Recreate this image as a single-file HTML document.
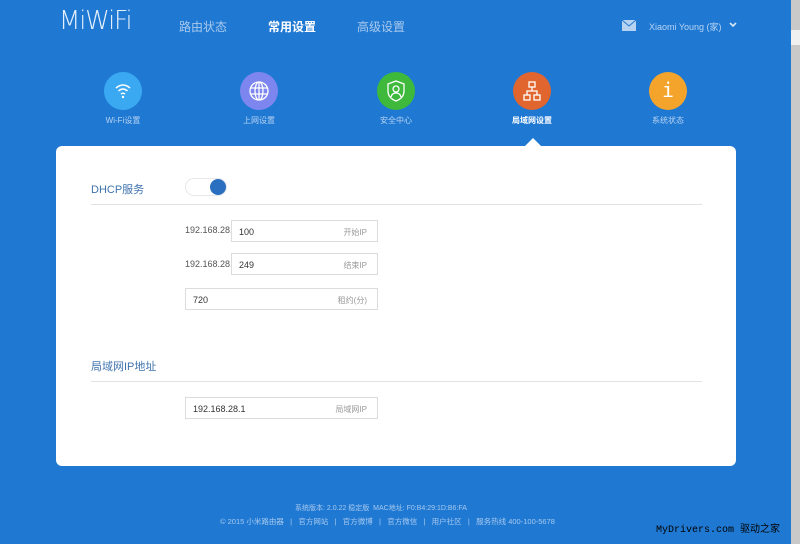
<!DOCTYPE html><html><head><meta charset="utf-8"><style>
*{margin:0;padding:0;box-sizing:border-box}
body{width:800px;height:544px;overflow:hidden;background:#1f79d3;font-family:"Liberation Sans","Noto Sans CJK SC",sans-serif;position:relative}
.a{position:absolute}
.nav{color:#a9c9ee;font-size:12px;top:18px}
.ic{width:38px;height:38px;border-radius:50%;top:72px}
.lb{top:115px;font-size:8px;color:#b8d3f2;width:80px;text-align:center}
.in{background:#fff;border:1px solid #dcdcdc;height:22px;font-size:9px;color:#333;padding:6px 0 0 7px}
.ph{position:absolute;right:10px;top:6px;color:#999;font-size:8px}
.g{font-size:9px;color:#555}
</style></head><body>
<div class="a" style="left:59px;top:6px;color:#e6f0fb;font-size:26px;font-weight:100;letter-spacing:-1px;font-family:'DejaVu Sans','Liberation Sans',sans-serif;transform:scaleX(.95);transform-origin:left">MiWiFi</div>
<div class="a nav" style="left:179px">路由状态</div>
<div class="a nav" style="left:268px;color:#fff;font-weight:bold">常用设置</div>
<div class="a nav" style="left:357px">高级设置</div>
<svg class="a" style="left:622px;top:20px" width="14" height="11"><rect width="14" height="11" fill="#b8d3f2"/><path d="M0 0L7 6L14 0" stroke="#1f79d3" fill="none"/></svg>
<div class="a" style="left:649px;top:20px;font-size:9px;color:#b8d3f2">Xiaomi Young (家)</div>
<svg class="a" style="left:729px;top:22px" width="8" height="6"><path d="M1 1L4 4L7 1" stroke="#d7e6f7" stroke-width="1.6" fill="none"/></svg>
<div class="a ic" style="left:104px;background:#3aa9f2"></div>
<svg class="a" style="left:104px;top:72px" width="38" height="38"><g stroke="#fff" fill="none" stroke-width="1.5"><path d="M12 16Q19 10 26 16"/><path d="M14.5 19Q19 15 23.5 19"/><path d="M17 22Q19 20.5 21 22"/></g><circle cx="19" cy="25" r="1.2" fill="#fff"/></svg>
<div class="a lb" style="left:83px">Wi-Fi设置</div>
<div class="a ic" style="left:240px;background:#7d86ee"></div>
<svg class="a" style="left:240px;top:72px" width="38" height="38"><g stroke="#fff" fill="none" stroke-width="1.3"><circle cx="19" cy="19" r="9"/><ellipse cx="19" cy="19" rx="4" ry="9"/><path d="M10 16H28M10 22H28M19 10V28"/></g></svg>
<div class="a lb" style="left:219px">上网设置</div>
<div class="a ic" style="left:377px;background:#3eb93b"></div>
<svg class="a" style="left:377px;top:72px" width="38" height="38"><g stroke="#fff" fill="none" stroke-width="1.3"><path d="M19 9L27 12V19Q27 26 19 29Q11 26 11 19V12Z"/><circle cx="19" cy="17" r="3"/><path d="M14 25Q15 21 19 21Q23 21 24 25"/></g></svg>
<div class="a lb" style="left:356px">安全中心</div>
<div class="a ic" style="left:513px;background:#e0652e"></div>
<svg class="a" style="left:513px;top:72px" width="38" height="38"><g stroke="#fff" fill="none" stroke-width="1.3"><rect x="16" y="10" width="6" height="5"/><rect x="11" y="23" width="6" height="5"/><rect x="21" y="23" width="6" height="5"/><path d="M19 15V19M14 23V19H24V23"/></g></svg>
<div class="a lb" style="left:492px;color:#fff;font-weight:bold">局域网设置</div>
<div class="a ic" style="left:649px;background:#f4a42a"></div>
<div class="a" style="left:649px;top:78px;width:38px;text-align:center;color:#fff;font-size:20px;font-family:'DejaVu Sans Mono',monospace">i</div>
<div class="a lb" style="left:628px">系统状态</div>
<div class="a" style="left:525px;top:138px;border:8px solid transparent;border-bottom-color:#fff;border-top:0"></div>
<div class="a" style="left:56px;top:146px;width:680px;height:320px;background:#fff;border-radius:6px"></div>
<div class="a" style="left:91px;top:181px;font-size:11px;color:#3e73ae">DHCP服务</div>
<div class="a" style="left:185px;top:178px;width:42px;height:18px;border-radius:9px;background:#fff;border:1px solid #e8e8e8"></div>
<div class="a" style="left:210px;top:179px;width:16px;height:16px;border-radius:50%;background:#2a6fc0"></div>
<div class="a" style="left:91px;top:204px;width:611px;height:1px;background:#e2e2e2"></div>
<div class="a g" style="left:185px;top:225px">192.168.28.</div>
<div class="a in" style="left:231px;top:220px;width:147px">100<span class="ph">开始IP</span></div>
<div class="a g" style="left:185px;top:259px">192.168.28.</div>
<div class="a in" style="left:231px;top:253px;width:147px">249<span class="ph">结束IP</span></div>
<div class="a in" style="left:185px;top:288px;width:193px">720<span class="ph">租约(分)</span></div>
<div class="a" style="left:91px;top:358px;font-size:11px;color:#3e73ae">局域网IP地址</div>
<div class="a" style="left:91px;top:381px;width:611px;height:1px;background:#e2e2e2"></div>
<div class="a in" style="left:185px;top:397px;width:193px">192.168.28.1<span class="ph">局域网IP</span></div>
<div class="a" style="left:295px;top:503px;font-size:7px;color:#a6c8ee;white-space:nowrap">系统版本: 2.0.22 稳定版 &nbsp;MAC地址: F0:B4:29:1D:B6:FA</div>
<div class="a" style="left:220px;top:516px;font-size:7.5px;color:#a6c8ee;white-space:nowrap">© 2015 小米路由器 &nbsp; | &nbsp; 官方网站 &nbsp; | &nbsp; 官方微博 &nbsp; | &nbsp; 官方微信 &nbsp; | &nbsp; 用户社区 &nbsp; | &nbsp; 服务热线 400-100-5678</div>
<div class="a" style="left:656px;top:520px;font-size:10px;color:#000;font-family:'Liberation Mono',monospace">MyDrivers.com 驱动之家</div>
<div class="a" style="left:791px;top:0;width:9px;height:544px;background:#c9c9c9"></div>
<div class="a" style="left:791px;top:30px;width:9px;height:15px;background:#f0f0f0"></div>
</body></html>
